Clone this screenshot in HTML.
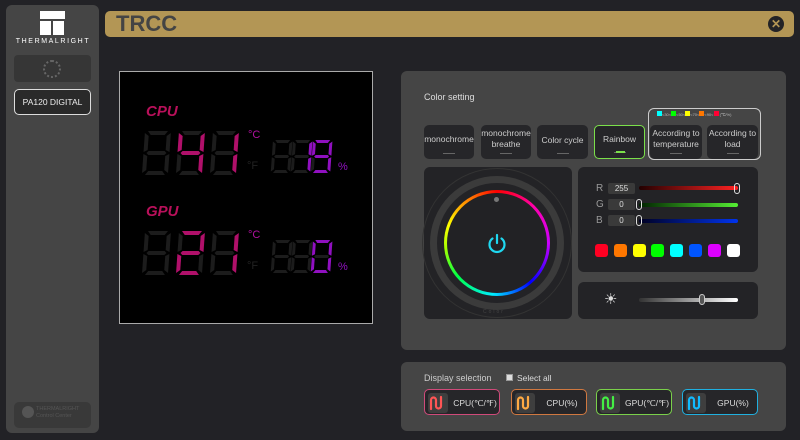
<!DOCTYPE html>
<html><head><meta charset="utf-8"><style>
*{margin:0;padding:0;box-sizing:border-box}
body{width:800px;height:440px;background:#222226;font-family:"Liberation Sans",sans-serif;position:relative;overflow:hidden;color:#ddd}
.abs{position:absolute}
.side{left:6px;top:5px;width:93px;height:428px;background:#454545;border-radius:6px}
.title{left:105px;top:11px;width:689px;height:26px;background:#b39655;border-radius:5px}
.panel{background:#454545;border-radius:6px}
.dark{background:#232326;border-radius:6px}
.btn{background:#262629;border-radius:5px;font-size:8.5px;color:#ccc;text-align:center;display:flex;align-items:center;justify-content:center;line-height:11px}
.btn:after{content:"";position:absolute;bottom:5px;left:50%;margin-left:-6px;width:12px;height:1px;background:#666}
.sel{border-radius:5px;background:#262629;height:26px;width:76px;font-size:8.5px;color:#ddd}
.sel .ic{position:absolute;left:3px;top:3px;width:20px;height:20px;background:#3e3e3e;border-radius:3px}
.sel span{position:absolute;left:26px;right:0;top:8px;text-align:center}
.sw{width:13px;height:13px;border-radius:3px;top:244px}
</style></head><body>
<div class="abs side"></div>
<div class="abs" style="left:40px;top:11px;width:25px;height:8px;background:#fff"></div>
<div class="abs" style="left:40px;top:21px;width:11px;height:14px;background:#fff"></div>
<div class="abs" style="left:53px;top:21px;width:11px;height:14px;background:#fff"></div>
<div class="abs" style="left:8px;top:38px;width:90px;font-size:7px;letter-spacing:1.6px;color:#fff;text-align:center">THERMALRIGHT</div>
<div class="abs" style="left:14px;top:55px;width:77px;height:27px;background:#363636;border-radius:4px"></div>
<div class="abs" style="left:43px;top:60px;width:18px;height:18px;border:2px dotted #666;border-radius:50%"></div>
<div class="abs" style="left:14px;top:89px;width:77px;height:26px;background:#2a2a2a;border:1px solid #ddd;border-radius:5px;font-size:8.5px;color:#eee;text-align:center;line-height:24px">PA120 DIGITAL</div>
<div class="abs" style="left:14px;top:402px;width:77px;height:26px;background:#393939;border-radius:5px"></div>
<div class="abs" style="left:22px;top:406px;width:12px;height:12px;border-radius:50%;background:#555"></div>
<div class="abs" style="left:36px;top:406px;font-size:5.5px;color:#555;line-height:7px">THERMALRIGHT<br>Control Center</div>

<div class="abs title"></div>
<div class="abs" style="left:116px;top:11px;font-size:22px;font-weight:bold;color:#444">TRCC</div>
<div class="abs" style="left:768px;top:16px;width:16px;height:16px;border-radius:50%;background:#232326;color:#b39655;font-size:12px;font-weight:bold;text-align:center;line-height:16px">✕</div>

<div class="abs" style="left:119px;top:71px;width:254px;height:253px;background:#000;border:1px solid #aaa"></div>
<svg class="abs" style="left:0;top:0" width="800" height="440" id="lcd"></svg>
<div class="abs" style="left:146px;top:103px;font-size:15px;font-weight:bold;font-style:italic;color:#b8105a">CPU</div>
<div class="abs" style="left:146px;top:203px;font-size:15px;font-weight:bold;font-style:italic;color:#b8105a">GPU</div>
<div class="abs" style="left:248px;top:129px;font-size:11px;color:#b010a0">°C</div>
<div class="abs" style="left:247px;top:160px;font-size:11px;color:#222">°F</div>
<div class="abs" style="left:338px;top:161px;font-size:11px;color:#9010c0">%</div>
<div class="abs" style="left:248px;top:229px;font-size:11px;color:#b010a0">°C</div>
<div class="abs" style="left:247px;top:260px;font-size:11px;color:#222">°F</div>
<div class="abs" style="left:338px;top:261px;font-size:11px;color:#9010c0">%</div>

<div class="abs panel" style="left:401px;top:71px;width:385px;height:279px"></div>
<div class="abs" style="left:424px;top:92px;font-size:9px;color:#ddd">Color setting</div>
<div class="abs" style="left:648px;top:108px;width:113px;height:52px;border:1px solid #ccc;border-radius:6px"></div>
<div class="abs" style="left:657px;top:111px;font-size:4px;color:#bbb;white-space:nowrap"><span style="display:inline-block;width:5px;height:5px;background:#0ff"></span>&lt;30&lt;<span style="display:inline-block;width:5px;height:5px;background:#0f0"></span>&lt;50&lt;<span style="display:inline-block;width:5px;height:5px;background:#ff0"></span>&lt;70&lt;<span style="display:inline-block;width:5px;height:5px;background:#f70"></span>&lt;90&lt;<span style="display:inline-block;width:5px;height:5px;background:#f03"></span> (℃/%)</div>
<div class="abs btn" style="left:424px;top:125px;width:50px;height:34px;padding-bottom:6px">monochrome</div>
<div class="abs btn" style="left:481px;top:125px;width:50px;height:34px;padding-bottom:6px">monochrome<br>breathe</div>
<div class="abs btn" style="left:537px;top:125px;width:51px;height:34px;padding-bottom:4px">Color cycle</div>
<div class="abs btn" style="left:594px;top:125px;width:51px;height:34px;padding-bottom:6px;border:1px solid #7be04a">Rainbow</div>
<div class="abs btn" style="left:650px;top:125px;width:52px;height:34px;padding-bottom:6px">According to<br>temperature</div>
<div class="abs btn" style="left:707px;top:125px;width:51px;height:34px;padding-bottom:6px">According to<br>load</div>
<div class="abs" style="left:616px;top:151px;width:9px;height:2px;background:#7be04a"></div>

<div class="abs dark" style="left:424px;top:167px;width:148px;height:152px"></div>
<div class="abs" style="left:422px;top:168px;width:150px;height:150px;border-radius:50%;border:1px solid #333"></div>
<div class="abs" style="left:430px;top:176px;width:134px;height:134px;border-radius:50%;border:7px solid #3b3b3b"></div>
<div class="abs" style="left:444px;top:190px;width:106px;height:106px;border-radius:50%;background:conic-gradient(#f00,#f0a 45deg,#c0f 90deg,#00f 140deg,#0ef 185deg,#0f4 230deg,#af0 265deg,#ff0 290deg,#f80 325deg,#f00)"></div>
<div class="abs" style="left:447px;top:193px;width:100px;height:100px;border-radius:50%;background:#222225"></div>
<div class="abs" style="left:494px;top:197px;width:5px;height:5px;border-radius:50%;background:#777"></div>
<svg class="abs" style="left:486px;top:232px" width="22" height="22" viewBox="0 0 22 22"><path d="M6.5 6.5A7.5 7.5 0 1 0 15.5 6.5" fill="none" stroke="#1fd8f0" stroke-width="2.2" stroke-linecap="round"/><path d="M11 3v8" stroke="#1fd8f0" stroke-width="2.2" stroke-linecap="round"/></svg>
<div class="abs" style="left:483px;top:309px;font-size:5px;letter-spacing:2px;color:#444">Color</div>

<div class="abs dark" style="left:578px;top:167px;width:180px;height:105px"></div>
<div class="abs" style="left:596px;top:183px;font-size:10px;color:#999">R</div>
<div class="abs" style="left:596px;top:199px;font-size:10px;color:#999">G</div>
<div class="abs" style="left:596px;top:215px;font-size:10px;color:#999">B</div>
<div class="abs" style="left:608px;top:183px;width:27px;height:11px;background:#3a3a3a;border-radius:2px;font-size:8px;text-align:center;line-height:11px">255</div>
<div class="abs" style="left:608px;top:199px;width:27px;height:11px;background:#3a3a3a;border-radius:2px;font-size:8px;text-align:center;line-height:11px">0</div>
<div class="abs" style="left:608px;top:215px;width:27px;height:11px;background:#3a3a3a;border-radius:2px;font-size:8px;text-align:center;line-height:11px">0</div>
<div class="abs" style="left:639px;top:186px;width:99px;height:4px;border-radius:2px;background:linear-gradient(90deg,#200,#f22)"></div>
<div class="abs" style="left:639px;top:203px;width:99px;height:4px;border-radius:2px;background:linear-gradient(90deg,#020,#5e3)"></div>
<div class="abs" style="left:639px;top:219px;width:99px;height:4px;border-radius:2px;background:linear-gradient(90deg,#002,#03e)"></div>
<div class="abs" style="left:734px;top:183px;width:6px;height:11px;border:1.5px solid #ddd;border-radius:3px"></div>
<div class="abs" style="left:636px;top:199px;width:6px;height:11px;border:1.5px solid #ddd;border-radius:3px"></div>
<div class="abs" style="left:636px;top:215px;width:6px;height:11px;border:1.5px solid #ddd;border-radius:3px"></div>
<div class="abs sw" style="left:595px;background:#f02"></div>
<div class="abs sw" style="left:614px;background:#f70"></div>
<div class="abs sw" style="left:633px;background:#ff0"></div>
<div class="abs sw" style="left:651px;background:#0f0"></div>
<div class="abs sw" style="left:670px;background:#0ff"></div>
<div class="abs sw" style="left:689px;background:#05f"></div>
<div class="abs sw" style="left:708px;background:#d0f"></div>
<div class="abs sw" style="left:727px;background:#fff"></div>

<div class="abs dark" style="left:578px;top:282px;width:180px;height:37px"></div>
<div class="abs" style="left:604px;top:290px;font-size:15px;color:#ddd">☀</div>
<div class="abs" style="left:639px;top:298px;width:99px;height:4px;border-radius:2px;background:linear-gradient(90deg,#333,#fff)"></div>
<div class="abs" style="left:699px;top:294px;width:6px;height:11px;border:1.5px solid #ccc;border-radius:3px;background:#555"></div>

<div class="abs panel" style="left:401px;top:362px;width:385px;height:69px"></div>
<div class="abs" style="left:424px;top:373px;font-size:9px;color:#ccc">Display selection</div>
<div class="abs" style="left:506px;top:374px;width:7px;height:7px;background:#ddd;border:1px solid #999"></div>
<div class="abs" style="left:517px;top:373px;font-size:8.5px;color:#ddd">Select all</div>
<div class="abs sel" style="left:424px;top:389px;border:1px solid #d04a7a"><div class="ic"></div><span>CPU(℃/℉)</span></div>
<div class="abs sel" style="left:511px;top:389px;border:1px solid #d07840"><div class="ic"></div><span>CPU(%)</span></div>
<div class="abs sel" style="left:596px;top:389px;border:1px solid #7ad04a"><div class="ic"></div><span>GPU(℃/℉)</span></div>
<div class="abs sel" style="left:682px;top:389px;border:1px solid #20b0e0"><div class="ic"></div><span>GPU(%)</span></div>
<svg class="abs" style="left:0;top:0" width="800" height="440">
<g fill="none" stroke-width="2.2" stroke-linecap="round">
<path d="M431 409V400a2.5 2.5 0 0 1 5 0v6a2.5 2.5 0 0 0 5 0V397" stroke="#f55"/>
<path d="M518 409V400a2.5 2.5 0 0 1 5 0v6a2.5 2.5 0 0 0 5 0V397" stroke="#fa4"/>
<path d="M603 409V400a2.5 2.5 0 0 1 5 0v6a2.5 2.5 0 0 0 5 0V397" stroke="#4e4"/>
<path d="M689 409V400a2.5 2.5 0 0 1 5 0v6a2.5 2.5 0 0 0 5 0V397" stroke="#1bf"/>
</g></svg>
<script>
var S={a:"3,0 23,0 20,4 6,4",b:"26,2 22,5 22,19 26,21",c:"26,23 22,25 22,39 26,42",d:"6,40 20,40 23,44 3,44",e:"0,23 4,25 4,39 0,42",f:"0,2 4,5 4,19 0,21",g:"5,20 21,20 23,22 21,24 5,24 3,22"};
var h="";
function dig(x,y,sc,on,col){h+='<g transform="translate('+x+','+y+') scale('+sc+') skewX(-4)">';for(var k in S){h+='<polygon points="'+S[k]+'" fill="'+(on.indexOf(k)>=0?col:'#1c1c1c')+'"/>';}h+='</g>';}
var P="#b0106a",V="#9010c0";
dig(145,131,1,"",P);dig(179,131,1,"fbgc",P);dig(213,131,1,"bc",P);
dig(273,140,.75,"",V);dig(293,140,.75,"bc",V);dig(313,140,.75,"afbgcd",V);
dig(145,231,1,"",P);dig(179,231,1,"abged",P);dig(213,231,1,"bc",P);
dig(273,240,.75,"",V);dig(293,240,.75,"",V);dig(313,240,.75,"abcdef",V);
document.getElementById("lcd").innerHTML=h;
</script>
</body></html>
